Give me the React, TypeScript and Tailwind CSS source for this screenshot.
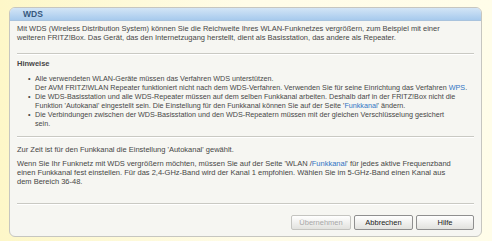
import React from 'react';

const Sep: React.FC = () => (
  <div className="mx-[7px] border-t border-[#c9c9c3] border-b border-b-white" />
);

const Btn: React.FC<{ label: string; disabled?: boolean; w: string }> = ({ label, disabled, w }) => (
  <button
    type="button"
    disabled={disabled}
    className={`${w} h-[15px] rounded-[2px] border text-[7.5px] leading-none bg-gradient-to-b from-white to-[#e2e2de] ${
      disabled ? 'border-[#c4c4c0] text-[#a8a8a8]' : 'border-[#8f8f8f] text-[#222]'
    }`}
  >
    {label}
  </button>
);

const App: React.FC = () => {
  return (
    <div
      className="w-[492px] h-[241px] bg-gradient-to-r from-[#fdf7c8] via-[#fffce8] to-[#fffde9] pt-[7px] pl-[9px] pr-[10px] text-[#464646]"
      style={{ fontFamily: '"Liberation Sans", Arial, sans-serif' }}
    >
      <div className="h-[230px] rounded-[6px] border border-[#c6c6c0] bg-[#f6f6f2] overflow-hidden flex flex-col text-[7.5px] leading-[9px] whitespace-nowrap">
        <div className="h-[13px] bg-gradient-to-b from-[#d3e5f6] to-[#a7caed] border-b border-[#a9c3dd] pl-[13px] flex items-center">
          <span className="text-[8.5px] font-bold text-[#36587e] leading-none">WDS</span>
        </div>

        <div className="px-[7px] pt-[3px] pb-[11px]">
          Mit WDS (Wireless Distribution System) können Sie die Reichweite Ihres WLAN-Funknetzes vergrößern, zum Beispiel mit einer
          <br />
          weiteren FRITZ!Box. Das Gerät, das den Internetzugang herstellt, dient als Basisstation, das andere als Repeater.
        </div>
        <Sep />

        <div className="px-[7px] pt-[4px] font-bold">Hinweise</div>
        <ul className="pl-[18px] pr-[7px] pt-[6px] pb-[8px] text-[7.2px]">
          <li className="flex">
            <span className="w-[7px] shrink-0">•</span>
            <span>
              Alle verwendeten WLAN-Geräte müssen das Verfahren WDS unterstützen.
              <br />
              Der AVM FRITZ!WLAN Repeater funktioniert nicht nach dem WDS-Verfahren. Verwenden Sie für seine Einrichtung das Verfahren{' '}
              <span className="text-[#2f74c4]">WPS</span>.
            </span>
          </li>
          <li className="flex">
            <span className="w-[7px] shrink-0">•</span>
            <span>
              Die WDS-Basisstation und alle WDS-Repeater müssen auf dem selben Funkkanal arbeiten. Deshalb darf in der FRITZ!Box nicht die
              <br />
              Funktion 'Autokanal' eingestellt sein. Die Einstellung für den Funkkanal können Sie auf der Seite '
              <span className="text-[#2f74c4]">Funkkanal</span>' ändern.
            </span>
          </li>
          <li className="flex">
            <span className="w-[7px] shrink-0">•</span>
            <span>
              Die Verbindungen zwischen der WDS-Basisstation und den WDS-Repeatern müssen mit der gleichen Verschlüsselung gesichert
              <br />
              sein.
            </span>
          </li>
        </ul>
        <Sep />

        <div className="px-[7px] pt-[7px] pb-[17px]">
          <p className="mb-[5px]">Zur Zeit ist für den Funkkanal die Einstellung 'Autokanal' gewählt.</p>
          <p>
            Wenn Sie Ihr Funknetz mit WDS vergrößern möchten, müssen Sie auf der Seite 'WLAN /
            <span className="text-[#2f74c4]">Funkkanal</span>' für jedes aktive Frequenzband
            <br />
            einen Funkkanal fest einstellen. Für das 2,4-GHz-Band wird der Kanal 1 empfohlen. Wählen Sie im 5-GHz-Band einen Kanal aus
            <br />
            dem Bereich 36-48.
          </p>
        </div>
        <Sep />

        <div className="flex justify-end gap-[3px] pr-[7px] pt-[10px]">
          <Btn label="Übernehmen" disabled w="w-[60px]" />
          <Btn label="Abbrechen" w="w-[59px]" />
          <Btn label="Hilfe" w="w-[58px]" />
        </div>
      </div>
    </div>
  );
};

export default App;
